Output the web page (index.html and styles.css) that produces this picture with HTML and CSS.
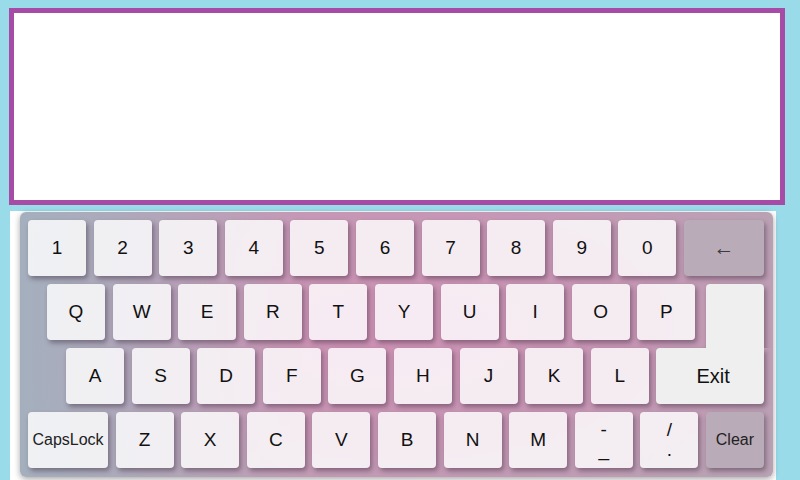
FILE: index.html
```html
<!DOCTYPE html>
<html>
<head>
<meta charset="utf-8">
<link rel="stylesheet" href="styles.css">
</head>
<body>
<div class="display"></div>
<div class="kb-wrap">
  <div class="panel">
    <div class="row">
      <div class="key">1</div><div class="key">2</div><div class="key">3</div><div class="key">4</div><div class="key">5</div>
      <div class="key">6</div><div class="key">7</div><div class="key">8</div><div class="key">9</div><div class="key">0</div>
      <div class="key wide dark arrow">&larr;</div>
    </div>
    <div class="row row-q">
      <div class="key">Q</div><div class="key">W</div><div class="key">E</div><div class="key">R</div><div class="key">T</div>
      <div class="key">Y</div><div class="key">U</div><div class="key">I</div><div class="key">O</div><div class="key">P</div>
      <div class="key enter-top"></div>
    </div>
    <div class="row row-a">
      <div class="key">A</div><div class="key">S</div><div class="key">D</div><div class="key">F</div><div class="key">G</div>
      <div class="key">H</div><div class="key">J</div><div class="key">K</div><div class="key">L</div>
      <div class="key exit">Exit</div>
    </div>
    <div class="row">
      <div class="key wide small">CapsLock</div>
      <div class="key">Z</div><div class="key">X</div><div class="key">C</div><div class="key">V</div><div class="key">B</div>
      <div class="key">N</div><div class="key">M</div>
      <div class="key dual"><span>-</span><span>_</span></div>
      <div class="key dual"><span>/</span><span>.</span></div>
      <div class="key dark small">Clear</div>
    </div>
  </div>
</div>
</body>
</html>
```
FILE: styles.css
```css
html, body {
  margin: 0;
  padding: 0;
}
body {
  background: #9adbea;
  font-family: "Liberation Sans", Arial, sans-serif;
  width: 800px;
  height: 480px;
  overflow: hidden;
}
.display {
  box-sizing: border-box;
  margin: 8px 0 0 9px;
  width: 776px;
  height: 197px;
  border: 5px solid #a64ca6;
  background: #fff;
}
.kb-wrap {
  box-sizing: border-box;
  margin: 6px 0 0 10px;
  width: 766px;
  height: 269px;
  background: #fff;
  padding: 1px 3px 0 10px;
}
.panel {
  box-sizing: border-box;
  width: 753px;
  height: 265px;
  border-radius: 6px;
  padding: 8px 9px 9px 8px;
  display: flex;
  flex-direction: column;
  gap: 8px;
  background:
    linear-gradient(to right, rgba(163, 176, 190, 0.95) 0%, rgba(163, 176, 190, 0.6) 14%, rgba(163, 176, 190, 0) 38%),
    radial-gradient(ellipse 60% 80% at 50% 45%, #cd91b4 0%, #c697b5 55%, #b9a2b4 100%);
  box-shadow: 0 2px 6px rgba(0, 0, 0, 0.35);
}
.row {
  display: flex;
  gap: 7.6px;
  height: 56px;
}
.row-q {
  padding-left: 19px;
}
.row-a {
  padding-left: 38px;
}
.key {
  box-sizing: border-box;
  width: 58px;
  height: 56px;
  flex: none;
  border-radius: 4px;
  background: rgba(255, 255, 255, 0.82);
  box-shadow: 2px 3px 5px rgba(40, 20, 40, 0.4);
  display: flex;
  align-items: center;
  justify-content: center;
  font-size: 19px;
  color: #111;
}
.key.wide {
  width: 80px;
}
.key.small {
  font-size: 16px;
  color: #222;
}
.key.dark {
  background: #baabb8;
}
.key.arrow {
  font-size: 21px;
  color: #3c3c3c;
}
.enter-top {
  margin-left: auto;
  height: 64px;
  background: #efefef;
  border-radius: 4px 4px 0 0;
  position: relative;
  z-index: 1;
  clip-path: inset(-10px -10px 0 -10px);
}
.exit {
  flex: 1 1 auto;
  width: auto;
  background: #efefef;
  border-radius: 4px 0 4px 4px;
  font-size: 20px;
  padding-left: 6px;
}
.dual {
  flex-direction: column;
  font-size: 19px;
  line-height: 20px;
}
.dual span {
  display: block;
}
```
